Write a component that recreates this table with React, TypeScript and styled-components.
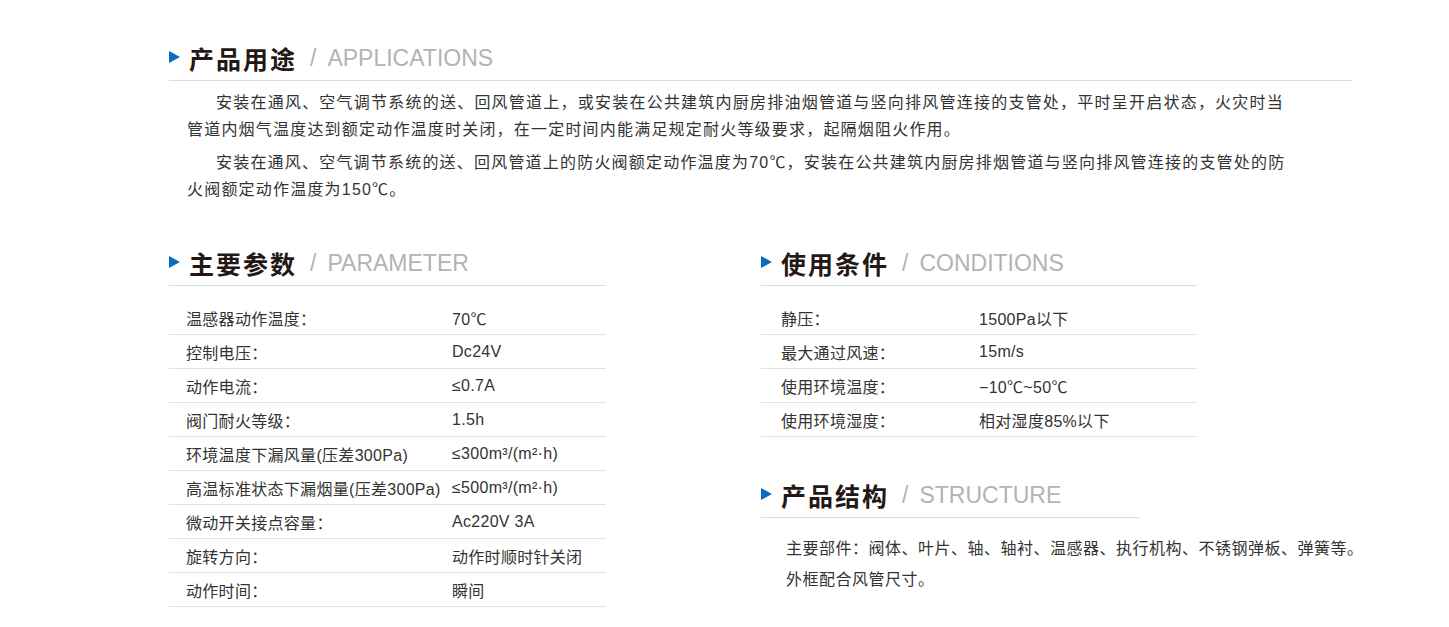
import styled, { createGlobalStyle } from 'styled-components'

const GlobalStyle = createGlobalStyle`
  body {
    margin: 0;
    background: #fff;
    font-family: "Liberation Sans", "Noto Sans CJK SC", sans-serif;
    color: #333;
  }
`

const Page = styled.div`
  width: 1183px;
  padding: 40px 0 0 169px;
`
const Header = styled.div<{ $width?: number }>`
  display: flex;
  align-items: center;
  height: 36px;
  padding-bottom: 4px;
  width: ${(p) => (p.$width ? `${p.$width}px` : '100%')};
  border-bottom: 1px solid #dcdcdc;
`
const Arrow = styled.span`
  width: 0;
  height: 0;
  border-left: 11px solid #0a6cc0;
  border-top: 6px solid transparent;
  border-bottom: 6px solid transparent;
  margin: 0 9px 2px 0;
`
const Title = styled.span`
  font-size: 25px;
  font-weight: 700;
  letter-spacing: 2px;
  color: #231815;
`
const Slash = styled.span`
  margin: 0 11px 0 13px;
  font-size: 23px;
  color: #b3b3b3;
`
const SubTitle = styled.span`
  font-size: 23px;
  color: #b3b3b3;
  white-space: nowrap;
`
const Intro = styled.div`
  width: 1097px;
  padding: 8px 0 0 18px;
`
const Para = styled.p`
  margin: 0 0 6px;
  font-size: 16px;
  letter-spacing: 1.2px;
  line-height: 27px;
  color: #333;
`
const Line = styled.span<{ $first?: boolean }>`
  display: block;
  white-space: nowrap;
  text-indent: ${(p) => (p.$first ? '29px' : '0')};
  text-align: ${(p) => (p.$first ? 'justify' : 'left')};
  text-align-last: ${(p) => (p.$first ? 'justify' : 'left')};
`
const Columns = styled.div`
  display: flex;
  margin-top: 42px;
`
const Column = styled.div<{ $width: number; $offset?: number }>`
  width: ${(p) => p.$width}px;
  margin-left: ${(p) => p.$offset ?? 0}px;
`
const Table = styled.div`
  margin-top: 15px;
`
const Row = styled.div<{ $indent: number }>`
  display: flex;
  align-items: center;
  height: 33px;
  padding-left: ${(p) => p.$indent}px;
  border-bottom: 1px solid #e3e3e3;
  font-size: 16px;
  letter-spacing: 0.3px;
  color: #333;
`
const Label = styled.span<{ $width: number }>`
  width: ${(p) => p.$width}px;
  flex-shrink: 0;
  white-space: nowrap;
`
const Value = styled.span`
  white-space: nowrap;
`
const Block = styled.div`
  margin-top: 40px;
`
const Structure = styled.div`
  padding: 15px 0 0 25px;
  font-size: 16px;
  letter-spacing: 0.5px;
  line-height: 31px;
  white-space: nowrap;
  color: #333;
`

const intro: [string, string][] = [
  [
    '安装在通风、空气调节系统的送、回风管道上，或安装在公共建筑内厨房排油烟管道与竖向排风管连接的支管处，平时呈开启状态，火灾时当',
    '管道内烟气温度达到额定动作温度时关闭，在一定时间内能满足规定耐火等级要求，起隔烟阻火作用。',
  ],
  [
    '安装在通风、空气调节系统的送、回风管道上的防火阀额定动作温度为70℃，安装在公共建筑内厨房排烟管道与竖向排风管连接的支管处的防',
    '火阀额定动作温度为150℃。',
  ],
]

const params: [string, string][] = [
  ['温感器动作温度：', '70℃'],
  ['控制电压：', 'Dc24V'],
  ['动作电流：', '≤0.7A'],
  ['阀门耐火等级：', '1.5h'],
  ['环境温度下漏风量(压差300Pa)', '≤300m³/(m²·h)'],
  ['高温标准状态下漏烟量(压差300Pa)', '≤500m³/(m²·h)'],
  ['微动开关接点容量：', 'Ac220V 3A'],
  ['旋转方向：', '动作时顺时针关闭'],
  ['动作时间：', '瞬间'],
]

const conditions: [string, string][] = [
  ['静压：', '1500Pa以下'],
  ['最大通过风速：', '15m/s'],
  ['使用环境温度：', '−10℃~50℃'],
  ['使用环境湿度：', '相对湿度85%以下'],
]

const SectionHeader = ({ title, en, width }: { title: string; en: string; width?: number }) => (
  <Header $width={width}>
    <Arrow />
    <Title>{title}</Title>
    <Slash>/</Slash>
    <SubTitle>{en}</SubTitle>
  </Header>
)

const App = () => {
  return (
    <Page>
      <GlobalStyle />
      <SectionHeader title="产品用途" en="APPLICATIONS" />
      <Intro>
        {intro.map(([first, rest]) => (
          <Para key={first}>
            <Line $first>{first}</Line>
            <Line>{rest}</Line>
          </Para>
        ))}
      </Intro>

      <Columns>
        <Column $width={437}>
          <SectionHeader title="主要参数" en="PARAMETER" />
          <Table>
            {params.map(([k, v]) => (
              <Row key={k} $indent={17}>
                <Label $width={266}>{k}</Label>
                <Value>{v}</Value>
              </Row>
            ))}
          </Table>
        </Column>

        <Column $width={436} $offset={155}>
          <SectionHeader title="使用条件" en="CONDITIONS" />
          <Table>
            {conditions.map(([k, v]) => (
              <Row key={k} $indent={20}>
                <Label $width={198}>{k}</Label>
                <Value>{v}</Value>
              </Row>
            ))}
          </Table>

          <Block>
            <SectionHeader title="产品结构" en="STRUCTURE" width={378} />
            <Structure>
              主要部件：阀体、叶片、轴、轴衬、温感器、执行机构、不锈钢弹板、弹簧等。
              <br />
              外框配合风管尺寸。
            </Structure>
          </Block>
        </Column>
      </Columns>
    </Page>
  )
}

export default App
